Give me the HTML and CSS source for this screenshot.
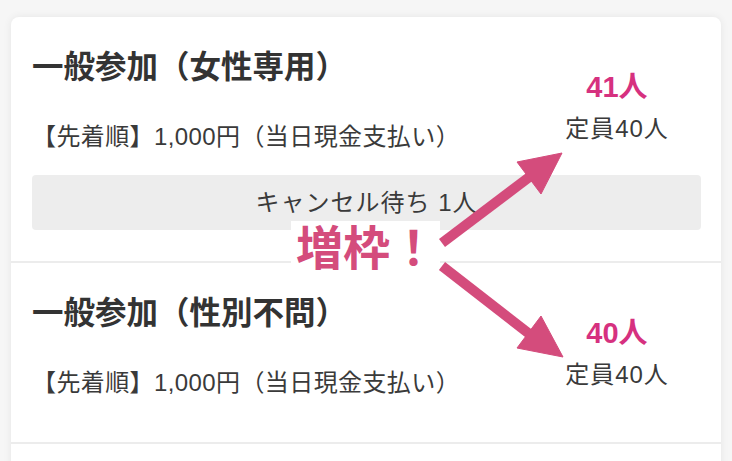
FILE: index.html
```html
<!DOCTYPE html>
<html lang="ja">
<head>
  <meta charset="UTF-8">
  <meta name="viewport" content="width=device-width, initial-scale=1.0">
  <title>参加枠</title>
  <link rel="stylesheet" href="styles.css">
</head>
<body>
  <div class="ticket_card">
    <div class="ticket_item">
      <div class="ticket_row">
        <div class="ticket_info">
          <h2 class="ticket_tit">一般参加（女性専用）</h2>
          <p class="ticket_price">【先着順】1,000円（当日現金支払い）</p>
        </div>
        <div class="ticket_count">
          <p class="count_num">41人</p>
          <p class="count_limit">定員40人</p>
        </div>
      </div>
      <div class="wait_box"><span>キャンセル待ち 1人</span></div>
    </div>
    <div class="ticket_item ticket_item_last">
      <div class="ticket_row">
        <div class="ticket_info">
          <h2 class="ticket_tit">一般参加（性別不問）</h2>
          <p class="ticket_price">【先着順】1,000円（当日現金支払い）</p>
        </div>
        <div class="ticket_count">
          <p class="count_num">40人</p>
          <p class="count_limit">定員40人</p>
        </div>
      </div>
    </div>
    <div class="ticket_item ticket_item_next"></div>
  </div>

  <!-- 注釈 -->
  <div class="note_label">増枠！</div>
  <svg class="note_arrows" width="732" height="461" viewBox="0 0 732 461">
    <g fill="#d44c7c" stroke="#d44c7c">
      <line x1="442" y1="243" x2="532" y2="175" stroke-width="10"/>
      <polygon points="517,162 541,194 562,153" stroke-width="1"/>
      <line x1="442" y1="266" x2="532" y2="336" stroke-width="10"/>
      <polygon points="517,348 541,316 563,357" stroke-width="1"/>
    </g>
  </svg>
</body>
</html>
```

FILE: styles.css
```css
*{margin: 0;padding: 0;box-sizing: border-box;}
html,body{width:100%;height:100%;overflow: hidden;}
body{padding:17px 11px 0;background-color: #f6f6f6;font-family: "Liberation Sans", "Noto Sans CJK JP", sans-serif;color: #333;position: relative;}
.ticket_card{background-color: #fff;border-radius: 8px 8px 0 0;box-shadow: 0 0 8px rgba(0,0,0,0.07);}
.ticket_item{padding:28px 20px 31px 21px;border-bottom: 2px solid #ececec;}
.ticket_item_last{padding-bottom: 42px;}
.ticket_item_next{height: 40px;border-bottom: 0;}
.ticket_row{display: flex;justify-content: space-between;}
.ticket_tit{font-size: 31.5px;line-height: 44px;font-weight: bold;color: #333;}
.ticket_price{margin-top: 31px;font-size: 24px;line-height: 34px;letter-spacing: 0.4px;color: #3a3a3a;}
.ticket_count{width: 168px;text-align: center;padding-top: 24px;}
.count_num{font-size: 29px;line-height: 36px;font-weight: bold;color: #d6317f;}
.count_limit{margin-top: 8px;font-size: 24px;line-height: 32px;letter-spacing: 1px;color: #3a3a3a;}
.wait_box{margin-top: 21px;height: 55px;display: flex;justify-content: center;align-items: center;background-color: #ededed;border-radius: 4px;font-size: 24px;line-height: 30px;letter-spacing: 1px;color: #3a3a3a;}
.note_label{position: absolute;left: 291px;top: 221px;width: 149px;height: 56px;padding-left: 5px;background-color: #fff;font-size: 47px;line-height: 56px;font-weight: bold;color: #d44c7c;}
.note_arrows{position: absolute;left: 0;top: 0;}
```
